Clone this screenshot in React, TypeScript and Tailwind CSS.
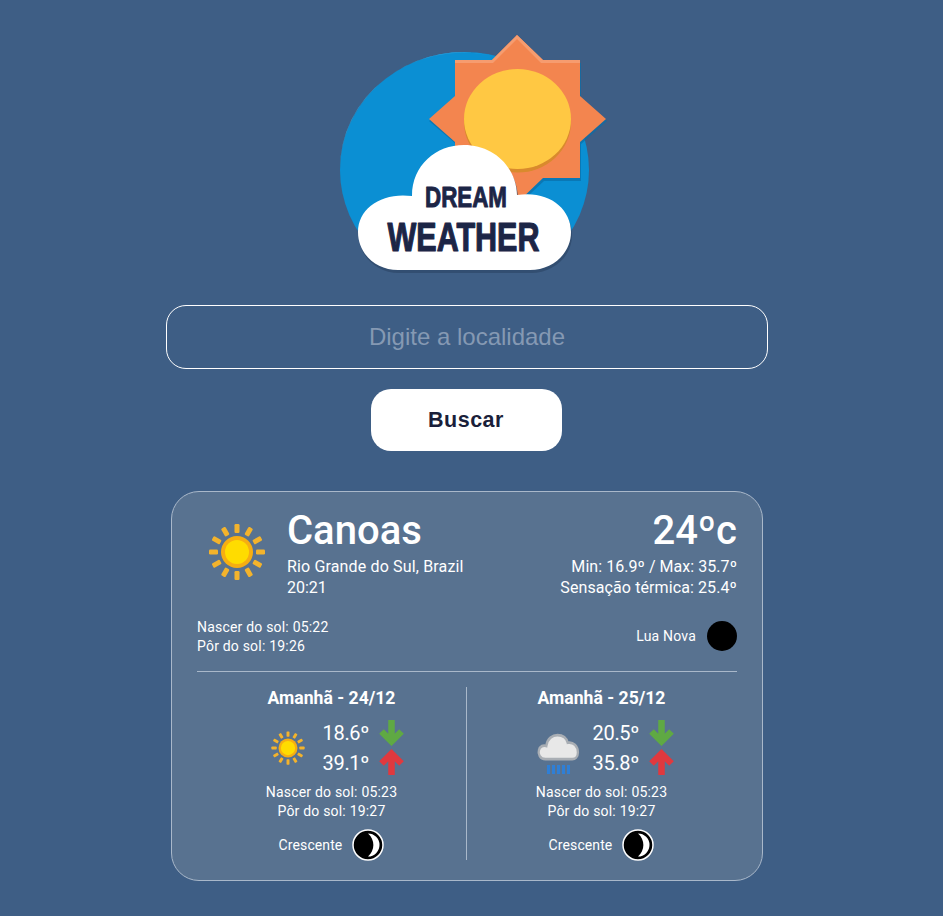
const cloudPath =
  'M412 196 C412 165 436 145 464 145 C492 145 516 165 517 195 C548 190 571 208 571 232 C571 254 552 270 530 270 L398 270 C376 270 358 254 358 232 C358 208 382 192 412 196Z';

const Logo = () => (
  <svg width="300" height="270" viewBox="320 20 300 270" className="block">
    <defs>
      <clipPath id="disc">
        <rect x="320" y="20" width="300" height="230" />
      </clipPath>
    </defs>
    <g clipPath="url(#disc)">
      <ellipse cx="464.5" cy="170" rx="124.5" ry="118" fill="#0b8fd3" />
      <path d="M340 170 A124.5 118 0 0 1 464 52 L490 55 A124 116 0 0 0 340 170Z" fill="#2aa0dc" />
    </g>
    <path d="M517 38 L544 63 L581 63 L581 99 L607 121 L581 144 L581 181 L544 181 L517 206 L490 181 L456 181 L456 144 L429 121 L456 99 L456 63 L490 63Z" fill="#0a6ea8" opacity="0.7" />
    <path d="M517 35 L543 60 L580 60 L580 96 L606 119 L580 142 L580 178 L543 178 L517 203 L492 178 L455 178 L455 142 L429 119 L455 96 L455 60 L492 60Z" fill="#f3854f" />
    <path d="M517 35 L543 60 L580 60 L580 63 L541 63 L517 39 L493 63 L455 63 L455 60 L492 60Z" fill="#f69c6f" />
    <ellipse cx="517.5" cy="122" rx="53.5" ry="50.5" fill="#d98a2d" />
    <ellipse cx="517.5" cy="119" rx="53.5" ry="50" fill="#ffc843" />
    <path d={cloudPath} fill="#2f4a6b" transform="translate(1 3)" opacity="0.8" />
    <path d={cloudPath} fill="#ffffff" />
    <text x="466" y="207" textAnchor="middle" fontFamily="'Liberation Sans', sans-serif" fontWeight="700" fontSize="30" fill="#1c2546" stroke="#1c2546" strokeWidth="1" strokeLinejoin="round" textLength="82" lengthAdjust="spacingAndGlyphs">DREAM</text>
    <text x="463.5" y="251" textAnchor="middle" fontFamily="'Liberation Sans', sans-serif" fontWeight="700" fontSize="41" fill="#1c2546" stroke="#1c2546" strokeWidth="1.2" strokeLinejoin="round" textLength="152" lengthAdjust="spacingAndGlyphs">WEATHER</text>
  </svg>
);

const SunIcon = ({ size }: { size: number }) => (
  <svg width={size} height={size} viewBox="0 0 64 64">
    {[0, 30, 60, 90, 120, 150, 180, 210, 240, 270, 300, 330].map((a) => (
      <rect key={a} x="29.5" y="4" width="5" height="9" rx="1.2" fill="#f3b32c" transform={`rotate(${a} 32 32)`} />
    ))}
    <circle cx="32" cy="32" r="16" fill="#f6ae12" />
    <circle cx="32" cy="32" r="12" fill="#ffdc00" />
  </svg>
);

const RainIcon = () => (
  <svg width="48" height="54" viewBox="0 0 48 54">
    <path
      d="M9 32 C3 32 1 27 2 24 C3 20 7 19 10 20 C11 13 17 10 22 10 C28 10 32 13 33 17 C39 16 44 20 44 26 C44 30 41 32 38 32Z"
      transform="translate(3 3) scale(0.93 1.1)"
      fill="#e8e8e8"
      stroke="#a9aeb4"
      strokeWidth="2.5"
    />
    <g fill="#2f7fd6">
      <rect x="13" y="44" width="3" height="9" />
      <rect x="18" y="44" width="3" height="9" />
      <rect x="23" y="44" width="3" height="9" />
      <rect x="28" y="44" width="3" height="9" />
      <rect x="33" y="44" width="3" height="9" />
    </g>
  </svg>
);

const Arrow = ({ up }: { up?: boolean }) => (
  <svg width="30" height="30" viewBox="0 0 30 30">
    <path
      d={up ? 'M14.5 27 V6 M4.5 15.5 L14.5 5.5 L24.5 15.5' : 'M14.5 2 V23 M4.5 13.5 L14.5 23.5 L24.5 13.5'}
      fill="none"
      stroke={up ? '#e0393e' : '#5fa943'}
      strokeWidth="6.5"
    />
  </svg>
);

const Moon = ({ crescent }: { crescent?: boolean }) => (
  <svg width="32" height="32" viewBox="0 0 32 32">
    <circle cx={crescent ? 16 : 17} cy="16" r="15" fill="#000000" stroke={crescent ? '#ffffff' : 'none'} strokeWidth="1.5" />
    {crescent && <path d="M16 4.5 A11.5 11.5 0 0 1 16 27.5 A15 15 0 0 0 16 4.5Z" fill="#ffffff" />}
  </svg>
);

const Forecast = ({ title, min, max, sunrise, sunset, rain }: { title: string; min: string; max: string; sunrise: string; sunset: string; rain?: boolean }) => (
  <div className="flex-1 flex flex-col items-center">
    <div className="pt-[1px] text-[17.6px] leading-[21px] font-bold text-white">{title}</div>
    <div className="flex items-center mt-[9px] h-[60px] ml-[7px]">
      <div className="w-[48px] flex justify-center mr-[11px]">{rain ? <RainIcon /> : <SunIcon size={38} />}</div>
      <div className="flex flex-col">
        {[{ v: min, up: false }, { v: max, up: true }].map((t) => (
          <div key={t.v} className="flex items-center h-[30px]">
            <span className="text-[20px] tracking-[-0.3px] text-white w-[54px]">{t.v}</span>
            <Arrow up={t.up} />
          </div>
        ))}
      </div>
    </div>
    <div className="mt-[5px] text-[14px] leading-[19px] tracking-[0.2px] text-white text-center">
      <div>Nascer do sol: {sunrise}</div>
      <div>Pôr do sol: {sunset}</div>
    </div>
    <div className="flex items-center gap-[10px] mt-[8px]">
      <span className="text-[14px] tracking-[0.1px] text-white">Crescente</span>
      <Moon crescent />
    </div>
  </div>
);

export default function App() {
  return (
    <div className="min-h-[916px] bg-[#3e5e85] flex flex-col items-center pr-[9px] font-['Roboto',sans-serif]">
      <div className="mt-[20px] ml-[6px]">
        <Logo />
      </div>
      <input
        placeholder="Digite a localidade"
        className="mt-[15px] w-[602px] h-[64px] rounded-[20px] border border-white bg-transparent text-center text-[24px] font-['Liberation_Sans',sans-serif] text-white outline-none placeholder:text-[#8599b3]"
      />
      <button className="mt-[20px] mr-[2px] w-[191px] h-[62px] rounded-[20px] bg-white text-[#1a1f3a] text-[21.5px] font-bold tracking-[0.5px] font-['Liberation_Sans',sans-serif]">
        Buscar
      </button>
      <div className="mt-[40px] w-[592px] h-[390px] rounded-[28px] border border-[#a9b8ca] bg-[#587290] px-[25px] text-white">
        <div className="flex items-start pt-[16px] h-[126px]">
          <div className="ml-[8px] mt-[12px] mr-[18px]">
            <SunIcon size={64} />
          </div>
          <div className="flex-1">
            <div className="text-[40px] leading-[46px] font-medium">Canoas</div>
            <div className="text-[16px] leading-[21px] tracking-[0.15px] mt-[2px]">Rio Grande do Sul, Brazil</div>
            <div className="text-[16px] leading-[21px]">20:21</div>
          </div>
          <div className="text-right">
            <div className="text-[40px] leading-[46px] font-medium">24ºc</div>
            <div className="text-[16px] leading-[21px] tracking-[0.05px] mt-[2px]">Min: 16.9º / Max: 35.7º</div>
            <div className="text-[16px] leading-[21px] tracking-[0.1px]">Sensação térmica: 25.4º</div>
          </div>
        </div>
        <div className="flex items-center justify-between h-[38px] text-[14px] leading-[19px] tracking-[0.2px]">
          <div>
            <div>Nascer do sol: 05:22</div>
            <div>Pôr do sol: 19:26</div>
          </div>
          <div className="flex items-center gap-[9px] mb-[2px]">
            <span>Lua Nova</span>
            <Moon />
          </div>
        </div>
        <div className="mt-[15px] border-t border-[#a9b8ca]" />
        <div className="flex mt-[15px] h-[173px] pr-[1px]">
          <Forecast title="Amanhã - 24/12" min="18.6º" max="39.1º" sunrise="05:23" sunset="19:27" />
          <div className="w-px bg-[#a9b8ca]" />
          <Forecast title="Amanhã - 25/12" min="20.5º" max="35.8º" sunrise="05:23" sunset="19:27" rain />
        </div>
      </div>
    </div>
  );
}
